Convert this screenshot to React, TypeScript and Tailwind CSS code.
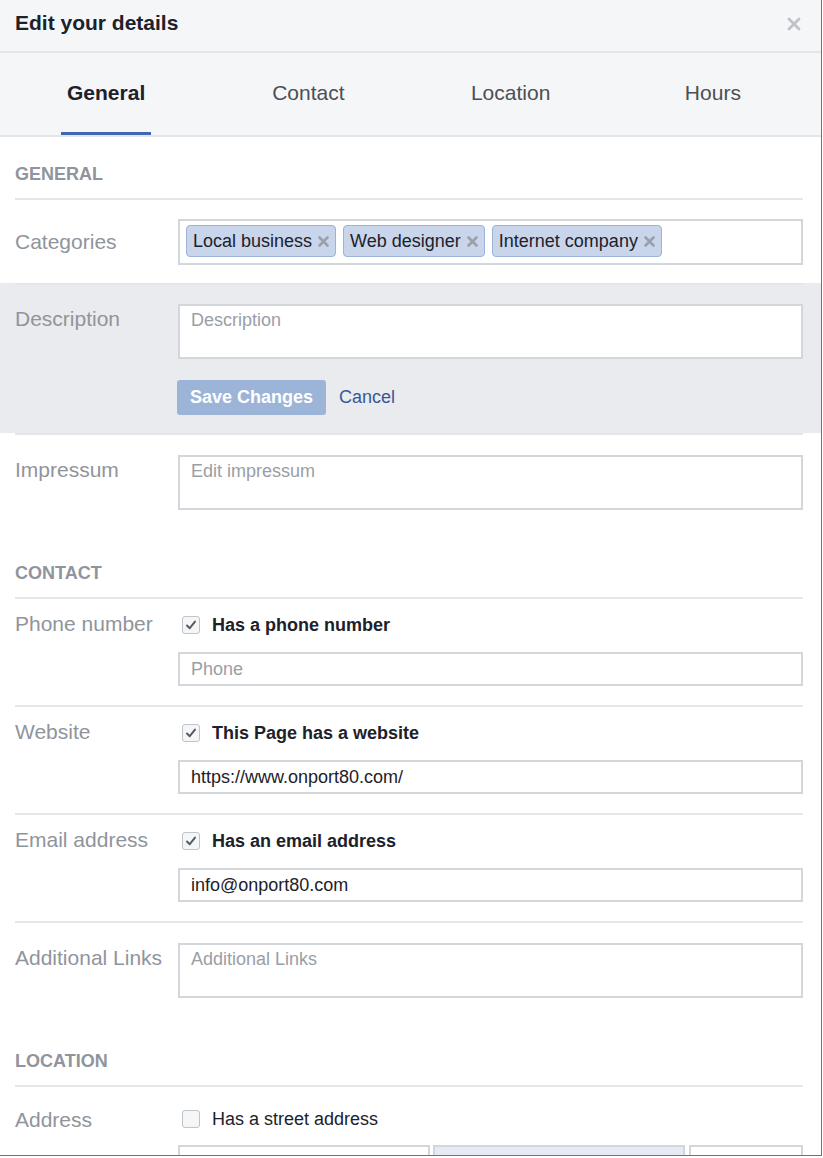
import React from 'react';

const tabs = ['General', 'Contact', 'Location', 'Hours'];
const categories = ['Local business', 'Web designer', 'Internet company'];

const CheckIcon = () => (
  <svg width="18" height="18" viewBox="0 0 18 18" fill="none">
    <path d="M4.5 9.5 L7.6 12.6 L13.5 5.2" stroke="#555a62" strokeWidth="2.2" strokeLinecap="round" strokeLinejoin="round" />
  </svg>
);

const Checkbox = ({ checked }: { checked?: boolean }) => (
  <span className="flex h-[18px] w-[18px] shrink-0 items-center justify-center rounded-[3px] border border-[#bfc3ca] bg-[#f5f6f7]">
    {checked ? <CheckIcon /> : null}
  </span>
);

const Label = ({ children, pt }: { children: React.ReactNode; pt: string }) => (
  <div className={`w-[163px] shrink-0 text-[21px] leading-[24px] text-[#90949c] ${pt}`}>{children}</div>
);

const SectionHeader = ({ title, first }: { title: string; first?: boolean }) => (
  <div
    className={`mx-[15px] mr-[18px] border-b-2 border-[#e5e6e9] pb-[14px] text-[18px] font-bold uppercase leading-[20px] text-[#90949c] ${
      first ? 'pt-[27px]' : 'pt-[33px]'
    }`}
  >
    {title}
  </div>
);

const Row = ({ children, top = true, gray }: { children: React.ReactNode; top?: boolean; gray?: boolean }) => (
  <div className={gray ? 'bg-[#e9ebee]' : ''}>
    <div className={`mx-[15px] mr-[18px] flex ${top ? 'border-t-2 border-[#e5e6e9]' : ''}`}>{children}</div>
  </div>
);

const TextArea = ({ placeholder }: { placeholder: string }) => (
  <div className="h-[55px] border-2 border-[#d3d6db] bg-white pl-[11px] pt-[3px] text-[18px] leading-[22px] text-[#9a9ea6]">
    {placeholder}
  </div>
);

const Input = ({ value, placeholder }: { value?: string; placeholder?: string }) => (
  <div
    className={`h-[34px] border-2 border-[#d3d6db] bg-white pl-[11px] pt-[4px] text-[18px] leading-[22px] ${
      value ? 'text-[#1d2129]' : 'text-[#9a9ea6]'
    }`}
  >
    {value ?? placeholder}
  </div>
);

const CheckRow = ({ label, text, value, placeholder, top = true }: { label: string; text: string; value?: string; placeholder?: string; top?: boolean }) => (
  <Row top={top}>
    <Label pt="pt-[13px]">{label}</Label>
    <div className="flex-1 pt-[15px] pb-[19px]">
      <div className="flex h-[22px] items-center pl-[4px]">
        <Checkbox checked />
        <span className="ml-[12px] text-[18px] font-bold leading-[22px] text-[#1d2129]">{text}</span>
      </div>
      <div className="mt-[16px]">
        <Input value={value} placeholder={placeholder} />
      </div>
    </div>
  </Row>
);

export default function App() {
  return (
    <div className="h-[1158px] w-[823px] overflow-hidden bg-white font-['Liberation_Sans',Arial,sans-serif]">
      <div className="h-[1156px] w-[822px] overflow-hidden border-r border-b border-[#6b7280] bg-white">
        {/* Header */}
        <div className="flex h-[53px] items-start justify-between border-b-2 border-[#e5e6e9] bg-[#f5f6f7] pl-[15px] pr-[20px] pt-[11px]">
          <div className="text-[21px] font-bold leading-[24px] text-[#1d2129]">Edit your details</div>
          <svg className="mt-[6px]" width="14" height="14" viewBox="0 0 14 14">
            <path d="M2 2 L12 12 M12 2 L2 12" stroke="#bec2c9" strokeWidth="2.8" strokeLinecap="round" />
          </svg>
        </div>

        {/* Tabs */}
        <div className="grid grid-cols-4 border-b-2 border-[#e5e6e9] bg-[#f5f6f7] pl-[5px] pr-[7px]">
          {tabs.map((t, i) => (
            <div key={t} className="flex h-[82px] flex-col items-center justify-between">
              <div
                className={`pt-[28px] text-[21px] leading-[24px] ${
                  i === 0 ? 'font-bold text-[#1d2129]' : 'text-[#4b4f56]'
                }`}
              >
                {t}
              </div>
              <div className={`h-[3px] w-[90px] ${i === 0 ? 'bg-[#4267b2]' : ''}`} />
            </div>
          ))}
        </div>

        {/* General */}
        <SectionHeader title="General" first />
        <Row top={false}>
          <Label pt="pt-[30px]">Categories</Label>
          <div className="flex-1 pt-[19px] pb-[18px]">
            <div className="flex h-[46px] gap-[7px] border-2 border-[#d3d6db] bg-white pl-[6px] pt-[4px]">
              {categories.map((c) => (
                <span
                  key={c}
                  className="flex h-[32px] items-center rounded-[4px] border border-[#9cb4d8] bg-[#c8d5eb] pl-[6px] pr-[5px] text-[18px] leading-[22px] text-[#1d2129]"
                >
                  {c}
                  <svg className="ml-[5px]" width="13" height="13" viewBox="0 0 13 13">
                    <path d="M2.5 2.5 L10.5 10.5 M10.5 2.5 L2.5 10.5" stroke="#9aa0aa" strokeWidth="2.6" strokeLinecap="round" />
                  </svg>
                </span>
              ))}
            </div>
          </div>
        </Row>
        <Row gray>
          <Label pt="pt-[22px]">Description</Label>
          <div className="flex-1 pt-[19px] pb-[18px]">
            <TextArea placeholder="Description" />
            <div className="mt-[21px] flex items-center">
              <span className="-ml-[1px] flex h-[35px] items-center rounded-[3px] bg-[#9cb4d8] px-[13px] text-[18px] font-bold text-white">
                Save Changes
              </span>
              <span className="ml-[13px] text-[18px] text-[#365899]">Cancel</span>
            </div>
          </div>
        </Row>
        <Row>
          <Label pt="pt-[23px]">Impressum</Label>
          <div className="flex-1 pt-[20px] pb-[20px]">
            <TextArea placeholder="Edit impressum" />
          </div>
        </Row>

        {/* Contact */}
        <SectionHeader title="Contact" />
        <CheckRow top={false} label="Phone number" text="Has a phone number" placeholder="Phone" />
        <CheckRow label="Website" text="This Page has a website" value="https://www.onport80.com/" />
        <CheckRow label="Email address" text="Has an email address" value="info@onport80.com" />
        <Row>
          <Label pt="pt-[23px]">Additional Links</Label>
          <div className="flex-1 pt-[20px] pb-[20px]">
            <TextArea placeholder="Additional Links" />
          </div>
        </Row>

        {/* Location */}
        <SectionHeader title="Location" />
        <Row top={false}>
          <Label pt="pt-[21px]">Address</Label>
          <div className="flex-1 pt-[21px]">
            <div className="flex h-[22px] items-center pl-[4px]">
              <Checkbox />
              <span className="ml-[12px] text-[18px] leading-[22px] text-[#1d2129]">Has a street address</span>
            </div>
            <div className="mt-[15px] flex gap-[3px]">
              <div className="w-[252px]">
                <Input placeholder="Street address" />
              </div>
              <div className="w-[252px]">
                <div className="h-[34px] border-2 border-[#d3d6db] bg-[#e6eaf5] pl-[11px] pt-[4px] text-[18px] leading-[22px] text-[#1d2129]">
                  Hannover, Germany
                </div>
              </div>
              <div className="ml-[1px] flex-1">
                <Input placeholder="ZIP" />
              </div>
            </div>
          </div>
        </Row>
      </div>
    </div>
  );
}
